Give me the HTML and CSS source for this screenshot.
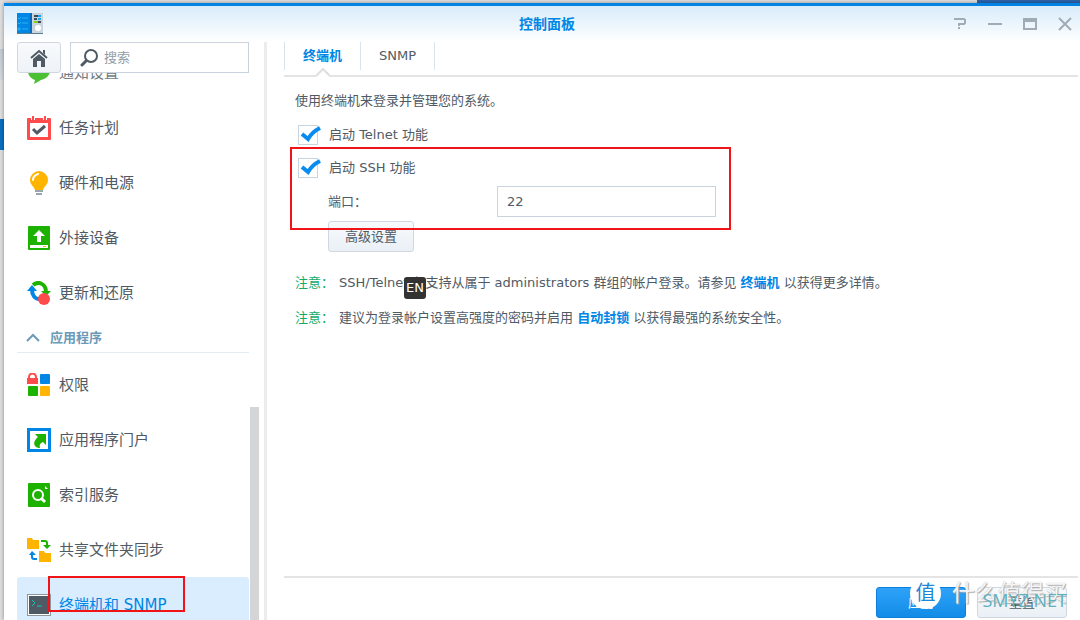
FILE: index.html
```html
<!DOCTYPE html>
<html lang="zh-CN">
<head>
<meta charset="utf-8">
<title>控制面板</title>
<link rel="stylesheet" href="styles.css">
</head>
<body>
<div class="window">
  <header class="titlebar">
    <svg class="app-icon" width="28" height="24" viewBox="0 0 28 24" aria-hidden="true">
      <rect x="15" y="1" width="12" height="21" fill="#c9d4dc"/>
      <rect x="1" y="1" width="15" height="21" fill="#0086e5"/>
      <rect x="1" y="21" width="26" height="1" fill="#5b7d92"/>
      <rect x="14" y="1" width="2" height="20" fill="#0a6dbb"/>
      <path d="M2 6l1 1 2-2M2 11l1 1 2-2M2 16h2v2H2zM6 6h6M6 11h6M6 17h6" fill="none" stroke="#27b5f5"/>
      <path d="M18 4h4M18 7h3M22 10h3" stroke="#3d4b57" stroke-width="2"/>
      <path d="M22 4h3M22 7h3" stroke="#1ba5ee" stroke-width="2"/>
      <path d="M18 10h4" stroke="#7fd21b" stroke-width="2"/>
      <circle cx="22" cy="16" r="3" fill="#fff"/>
    </svg>
    <h1 class="title">控制面板</h1>
    <div class="window-tools">
      <button class="tool" aria-label="帮助"><svg width="14" height="14" viewBox="0 0 14 14"><path d="M1 2h10l1 1v3l-1 1H6v2M6 10v2" fill="none" stroke="#a0abb5" stroke-width="2"/></svg></button>
      <button class="tool" aria-label="最小化"><svg width="14" height="14" viewBox="0 0 14 14"><path d="M0 7h14" stroke="#a0abb5" stroke-width="2"/></svg></button>
      <button class="tool" aria-label="最大化"><svg width="14" height="14" viewBox="0 0 14 14"><path d="M1 2h12v10H1zM1 4h12" fill="none" stroke="#a0abb5" stroke-width="2"/></svg></button>
      <button class="tool" aria-label="关闭"><svg width="14" height="14" viewBox="0 0 14 14"><path d="M1 1l12 12M13 1L1 13" stroke="#a0abb5" stroke-width="2"/></svg></button>
    </div>
  </header>
  <div class="columns">
    <aside class="sidebar">
      <div class="search-row">
        <button class="home" aria-label="主页">
          <svg width="20" height="20" viewBox="0 0 20 20"><path d="M2 10l8-7 8 7" fill="none" stroke="#505a64" stroke-width="2"/><path d="M14 2h2v5l-2-2z" fill="#505a64"/><path d="M10 6l6 5v8h-4v-6H8v6H4v-8z" fill="#505a64"/></svg>
        </button>
        <label class="search">
          <svg width="18" height="18" viewBox="0 0 18 18" aria-hidden="true"><circle cx="11" cy="7" r="6" fill="none" stroke="#505a64" stroke-width="2"/><path d="M6 12l-4 4" stroke="#505a64" stroke-width="3" stroke-linecap="round"/></svg>
          <input type="text" placeholder="搜索" aria-label="搜索">
        </label>
      </div>
      <nav class="list">
        <a class="item first" href="#">
          <svg width="24" height="24" viewBox="0 0 24 24"><path d="M12 2c7 0 11 4 11 8s-4 8-9 9l-7 4 1-4C3 17 1 14 1 10s4-8 11-8z" fill="#1db100"/></svg>
          <span>通知设置</span></a>
        <a class="item" href="#">
          <svg width="24" height="24" viewBox="0 0 24 24"><rect y="2" width="24" height="22" rx="1" fill="#ff4b4b"/><path d="M6 0v4M18 0v4" stroke="#fff" stroke-width="4"/><path d="M6 0v4M18 0v4" stroke="#ff4b4b" stroke-width="2"/><path d="M3 7h18v14H3z" fill="#fff"/><path d="M6 13l4 4 8-7" fill="none" stroke="#505a64" stroke-width="3"/></svg>
          <span>任务计划</span></a>
        <a class="item" href="#">
          <svg width="24" height="24" viewBox="0 0 24 24"><path d="M12 0a9 9 0 0 1 9 9c0 5-4 6-5 10H8C7 15 3 14 3 9a9 9 0 0 1 9-9z" fill="#ffb400"/><path d="M6 9c0-3 2-5 5-6" fill="none" stroke="#fff" stroke-width="2" stroke-linecap="round"/><path d="M8 20h8M9 23h6" stroke="#9aa5af" stroke-width="2"/></svg>
          <span>硬件和电源</span></a>
        <a class="item" href="#">
          <svg width="24" height="24" viewBox="0 0 24 24"><rect x="1" width="22" height="24" rx="1" fill="#1db100"/><path d="M12 4l6 6h-4v6h-4v-6H6zM3 19h18v3H3z" fill="#fff"/><path d="M16 20h3v1h-3z" fill="#ffb400"/></svg>
          <span>外接设备</span></a>
        <a class="item" href="#">
          <svg width="24" height="24" viewBox="0 0 24 24"><path d="M12 18c-4 0-7-4-7-9" fill="none" stroke="#0086e5" stroke-width="4"/><path d="M0 10l5-6 5 6z" fill="#0086e5"/><path d="M6 4c5-4 12-2 13 6" fill="none" stroke="#1db100" stroke-width="4"/><path d="M14 10h10l-5 5z" fill="#1db100"/><circle cx="17" cy="18" r="6" fill="#ff4b4b"/></svg>
          <span>更新和还原</span></a>
        <h2 class="section">
          <svg width="14" height="10" viewBox="0 0 14 10" aria-hidden="true"><path d="M1 8l6-6 6 6" fill="none" stroke="#6b9ab8" stroke-width="2"/></svg>
          <span>应用程序</span></h2>
        <a class="item" href="#">
          <svg width="24" height="24" viewBox="0 0 24 24"><path d="M0 5h11v6H0z" fill="#ff4b4b"/><path d="M2 6V4a3 3 0 0 1 7 0v2" fill="none" stroke="#ff4b4b" stroke-width="2"/><rect x="13" y="1" width="10" height="10" rx="1" fill="#0086e5"/><rect x="1" y="13" width="10" height="10" rx="1" fill="#1db100"/><rect x="13" y="13" width="10" height="10" rx="1" fill="#ffb400"/></svg>
          <span>权限</span></a>
        <a class="item" href="#">
          <svg width="24" height="24" viewBox="0 0 24 24"><rect width="24" height="24" fill="#0086e5"/><rect x="3" y="3" width="18" height="18" fill="#fff"/><path d="M8 6h11v11l-3-3c-3 1-4 3-3 6-5 0-9-5-2-11z" fill="#1db100"/></svg>
          <span>应用程序门户</span></a>
        <a class="item" href="#">
          <svg width="24" height="24" viewBox="0 0 24 24"><rect x="1" width="22" height="24" rx="1" fill="#1db100"/><circle cx="11" cy="12" r="5" fill="none" stroke="#fff" stroke-width="2"/><path d="M14 15l4 4" stroke="#fff" stroke-width="3"/><path d="M18 3l3 3h-3z" fill="#fff"/></svg>
          <span>索引服务</span></a>
        <a class="item" href="#">
          <svg width="24" height="24" viewBox="0 0 24 24"><path d="M0 0h5l1 2h6v9H0zM12 13h5l1 2h6v9H12z" fill="#ffb400"/><path d="M14 3h4q2 0 2 2v3" fill="none" stroke="#1db100" stroke-width="2"/><path d="M16 7h8l-4 4z" fill="#1db100"/><path d="M10 21H7q-2 0-2-2v-2" fill="none" stroke="#0086e5" stroke-width="2"/><path d="M2 17h7l-4-4z" fill="#0086e5"/></svg>
          <span>共享文件夹同步</span></a>
        <a class="item selected" href="#" aria-current="page">
          <svg width="24" height="24" viewBox="0 0 24 24"><rect y="1" width="24" height="22" fill="#8d969f"/><rect x="1" y="2" width="22" height="20" fill="#fff"/><rect x="2" y="3" width="20" height="18" fill="#505a64"/><path d="M5 7l3 3-3 3M10 13h5" fill="none" stroke="#1cc0b0"/></svg>
          <span>终端机和 SNMP</span>
          <i class="mark mark-item"></i></a>
      </nav>
      <i class="scroll-thumb"></i>
    </aside>
    <main class="main">
      <div class="tabs" role="tablist">
        <button class="tab active" role="tab" aria-selected="true">终端机<svg class="notch" width="14" height="9" viewBox="0 0 14 9" aria-hidden="true"><path d="M0 9V8l7-7 7 7v1z" fill="#fff"/><path d="M0 8l7-7 7 7" fill="none" stroke="#dedede" stroke-width="2"/></svg></button>
        <button class="tab" role="tab" aria-selected="false">SNMP</button>
      </div>
      <form class="form">
        <p class="intro">使用终端机来登录并管理您的系统。</p>
        <label class="check"><input type="checkbox" checked><svg class="tick" width="22" height="20" viewBox="0 0 22 20" aria-hidden="true"><path d="M3 9l6 5Q13 7 21 3" fill="none" stroke="#0a8bf0" stroke-width="4"/></svg>启动 Telnet 功能</label>
        <div class="ssh">
          <label class="check"><input type="checkbox" checked><svg class="tick" width="22" height="20" viewBox="0 0 22 20" aria-hidden="true"><path d="M3 9l6 5Q13 7 21 3" fill="none" stroke="#0a8bf0" stroke-width="4"/></svg>启动 SSH 功能</label>
          <div class="port-row"><label class="port-label" for="port">端口：</label><input class="port" id="port" type="text" value="22"></div>
          <i class="mark mark-ssh"></i>
        </div>
        <button class="button advanced" type="button">高级设置</button>
        <div class="note"><span class="note-label">注意：</span><p>SSH/Telnet 仅支持从属于 administrators 群组的帐户登录。请参见 <a href="#">终端机</a> 以获得更多详情。</p><span class="ime">EN</span></div>
        <div class="note"><span class="note-label">注意：</span><p>建议为登录帐户设置高强度的密码并启用 <a href="#">自动封锁</a> 以获得最强的系统安全性。</p></div>
      </form>
      <footer class="footer">
        <button class="button primary">应用</button>
        <button class="button">重置</button>
        <div class="watermark"><span class="seal">值</span><span class="brand">什么值得买</span><span class="site">SMYZ.NET</span></div>
      </footer>
    </main>
  </div>
</div>
</body>
</html>
```
FILE: styles.css
```css
* { box-sizing: border-box; }

body {
  margin: 0;
  height: 100vh;
  overflow: hidden;
  display: flex;
  padding: 3px 0 0 4px;
  background:
    linear-gradient(#2a66ae, #2a66ae) right top / 103px 3px no-repeat,
    linear-gradient(#0a6fc2, #0a6fc2) 0 119px / 4px 31px no-repeat,
    linear-gradient(#c3ccd4, #d3d9df) 0 49px / 4px 31px no-repeat,
    #dfdfdf;
  color: #505a64;
  font: 13px/20px "DejaVu Sans", "Noto Sans CJK SC", sans-serif;
}

h1, h2, p { margin: 0; }
button, input { font: inherit; color: inherit; }
a { color: #0086e5; font-weight: bold; text-decoration: none; }
svg { display: block; flex: none; }

/* The window runs past the right edge of the desktop */
.window {
  flex: 1;
  min-width: 0;
  margin-right: -10px;
  display: flex;
  flex-direction: column;
  border-top: 3px solid #0083e3;
  background: linear-gradient(#d8ecfa, #fff 36px);
  box-shadow: 0 0 4px rgba(0, 0, 0, .4);
}

.titlebar {
  display: grid;
  grid-template-columns: 1fr auto 1fr;
  align-items: center;
  height: 36px;
  padding: 0 12px;
}
.title { font-size: 14px; font-weight: bold; color: #0086e5; }
.window-tools { display: flex; justify-content: flex-end; gap: 21px; padding-right: 6px; }
.tool { padding: 0; border: 0; background: none; }

.columns { flex: 1; min-height: 0; display: flex; }

.sidebar {
  position: relative;
  width: 263px;
  flex: none;
  display: flex;
  flex-direction: column;
  padding: 0 15px 0 13px;
  border-right: 3px solid #ececec;
}
.search-row { display: flex; gap: 9px; position: relative; z-index: 1; }
.home {
  width: 44px;
  height: 31px;
  flex: none;
  display: grid;
  place-items: center;
  padding: 0;
  border: 1px solid #cfd8e2;
  border-radius: 3px;
  background: linear-gradient(#f8fafc, #eef3f8);
}
.search {
  flex: 1;
  min-width: 0;
  height: 31px;
  display: flex;
  align-items: center;
  gap: 6px;
  padding-left: 9px;
  border: 1px solid #c9d4df;
  background: #fff;
}
.search input { flex: 1; min-width: 0; padding: 0; border: 0; outline: 0; background: none; }
.search input::placeholder { color: #929ca6; opacity: 1; }

.list { flex: 1; min-height: 0; overflow: hidden; }
.item {
  position: relative;
  display: flex;
  align-items: center;
  gap: 8px;
  height: 55px;
  padding-left: 10px;
  border-radius: 3px;
  color: #505a64;
  font-size: 15px;
  font-weight: normal;
}
.first { margin-top: -28px; opacity: .8; }
.selected { background: #d9edff; color: #0086e5; }
.section {
  display: flex;
  align-items: center;
  gap: 10px;
  height: 33px;
  margin-bottom: 4px;
  padding: 3px 0 0 9px;
  border-bottom: 1px solid #e3ebf3;
  color: #6b9ab8;
  font-size: 13px;
}
.scroll-thumb {
  position: absolute;
  top: 365px;
  bottom: 0;
  right: 5px;
  width: 9px;
  background: #d3d5d7;
}

.mark { position: absolute; border: 2px solid #f01418; pointer-events: none; }
.mark-item { left: 31px; top: -1px; width: 137px; height: 36px; }
.mark-ssh { left: -5px; top: -11px; width: 441px; height: 83px; }

.main {
  flex: 1;
  min-width: 0;
  display: flex;
  flex-direction: column;
  margin: 0 12px 0 17px;
}
.tabs { display: flex; align-items: flex-start; height: 35px; border-bottom: 2px solid #e4e4e4; }
.tab {
  position: relative;
  height: 28px;
  padding: 0 18px;
  border: 0;
  border-right: 1px solid #d9e3ee;
  background: none;
}
.tab.active { border-left: 1px solid #d9e3ee; color: #0086e5; font-weight: bold; }
.notch { position: absolute; left: calc(50% - 7px); top: 26px; }

.form { flex: 1; padding: 14px 11px 0; }
.check {
  position: relative;
  display: flex;
  align-items: center;
  gap: 11px;
  height: 20px;
  margin: 14px 0 0 3px;
}
.check input {
  appearance: none;
  width: 20px;
  height: 20px;
  margin: 0;
  border: 1px solid #c9d4df;
  background: #fff;
}
.tick { position: absolute; left: 1px; top: 0; pointer-events: none; }
.ssh { position: relative; margin-top: 13px; }
.ssh .check { margin-top: 0; }
.port-row { display: flex; align-items: center; margin: 8px 0 0 33px; }
.port-label { width: 169px; }
.port {
  width: 219px;
  height: 31px;
  padding: 0 9px;
  border: 1px solid #c9d4df;
  background: #fff;
}
.button {
  height: 31px;
  padding: 0 16px;
  border: 1px solid #cfd8e2;
  border-radius: 3px;
  background: linear-gradient(#f8fafc, #eaf0f6);
}
.advanced { display: block; margin: 4px 0 21px 33px; }
.note { position: relative; display: flex; margin-bottom: 15px; }
.note-label { width: 44px; flex: none; color: #12ab6b; }
.ime {
  position: absolute;
  left: 109px;
  top: 4px;
  width: 22px;
  border-radius: 3px;
  padding: 1px 0;
  background: #333;
  color: #fff;
  text-align: center;
}

.footer {
  position: relative;
  display: flex;
  justify-content: flex-end;
  gap: 11px;
  padding: 9px 11px 2px 0;
  border-top: 2px solid #e4e4e4;
}
.footer .button { width: 90px; }
.primary { border-color: #0a7fdc; background: linear-gradient(#2ea2f8, #128ce8); color: #fff; }

.watermark { position: absolute; inset: 0 8px 0 auto; width: 160px; pointer-events: none; }
.seal {
  position: absolute;
  left: 0;
  top: 0;
  width: 31px;
  height: 31px;
  border-radius: 50%;
  background: #fff;
  color: #1b87d6;
  font-size: 20px;
  line-height: 31px;
  text-align: center;
}
.brand {
  position: absolute;
  left: 42px;
  top: 0;
  color: rgba(255, 255, 255, .9);
  font-size: 23px;
  line-height: 30px;
  white-space: nowrap;
  text-shadow: 1px 1px 1px #aaa, 0 0 1px #aaa;
}
.site {
  position: absolute;
  right: 3px;
  top: 12px;
  color: #5fb0bf;
  font-family: "Open Sans", sans-serif;
  font-size: 18px;
  white-space: nowrap;
}
```
